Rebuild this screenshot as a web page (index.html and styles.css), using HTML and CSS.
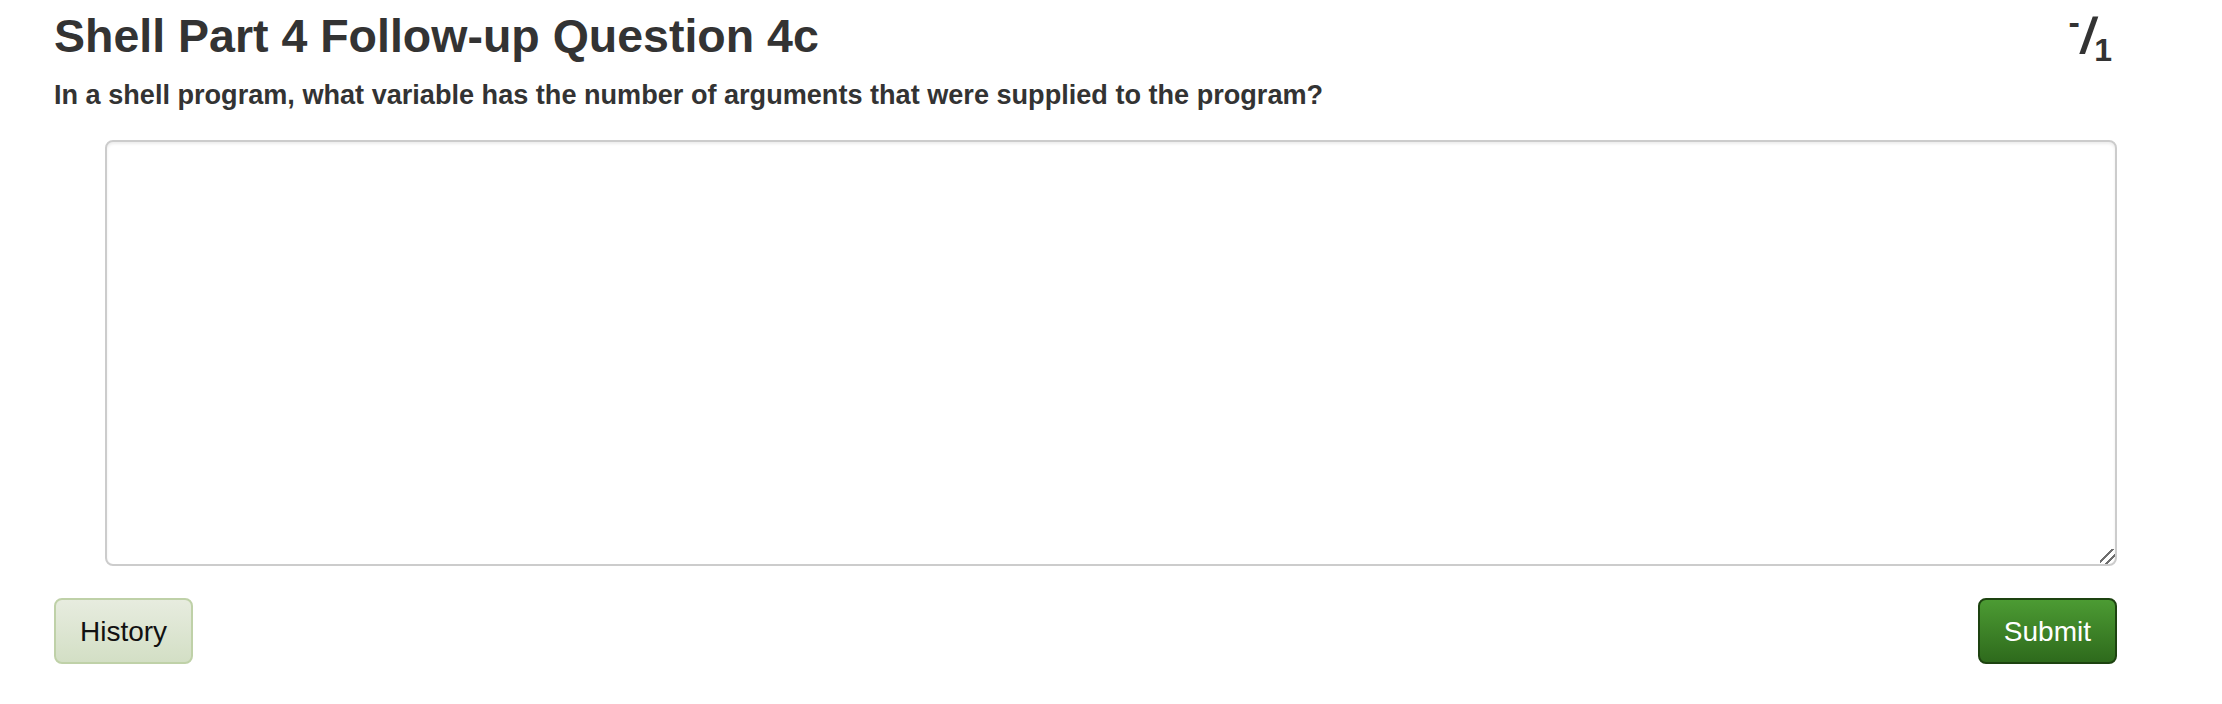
FILE: index.html
```html
<!DOCTYPE html>
<html lang="en">
<head>
<meta charset="utf-8">
<title>Shell Part 4 Follow-up Question 4c</title>
<link rel="stylesheet" href="styles.css">
</head>
<body>
<div class="page">
  <div class="header">
    <h1 class="title">Shell Part 4 Follow-up Question 4c</h1>
    <span class="score"><sup class="score-num">-</sup><span class="score-slash">/</span><sub class="score-den">1</sub></span>
  </div>
  <p class="question">In a shell program, what variable has the number of arguments that were supplied to the program?</p>
  <textarea class="answer"></textarea>
  <div class="actions">
    <button class="btn btn-history" type="button">History</button>
    <button class="btn btn-submit" type="button">Submit</button>
  </div>
</div>
</body>
</html>
```
FILE: styles.css
```css
html, body {
  margin: 0;
  padding: 0;
  background: #ffffff;
}

body {
  font-family: "Liberation Sans", Arial, Helvetica, sans-serif;
  color: #333333;
}

.page {
  padding: 10px 105px 0 54px;
}

.header {
  display: flex;
  align-items: baseline;
  justify-content: space-between;
}

.title {
  margin: 0;
  font-size: 46.5px;
  line-height: 52px;
  font-weight: bold;
  color: #333333;
}

.score {
  font-size: 48px;
  line-height: 52px;
  font-weight: bold;
  color: #333333;
  white-space: nowrap;
  margin-right: 5px;
}

.score-num,
.score-den {
  line-height: 0;
}

.score-num {
  font-size: 34px;
  vertical-align: 18px;
  margin-right: 2px;
}

.score-slash {
  display: inline-block;
  transform: skewX(-10deg) scaleY(1.05);
  margin-right: -1px;
}

.score-den {
  font-size: 32px;
  vertical-align: -9px;
}

.question {
  margin: 14px 0 0 0;
  font-size: 27.1px;
  line-height: 38px;
  font-weight: bold;
  color: #333333;
}

.answer {
  display: block;
  box-sizing: border-box;
  width: calc(100% - 51px);
  height: 426px;
  margin: 26px 0 0 51px;
  padding: 8px 12px;
  border: 2px solid #cccccc;
  border-radius: 8px;
  box-shadow: inset 0 2px 3px rgba(0, 0, 0, 0.075);
  font-family: "Liberation Sans", Arial, sans-serif;
  font-size: 28px;
  color: #555555;
  background: #ffffff;
  resize: both;
  outline: none;
}

.answer::-webkit-resizer {
  background: linear-gradient(135deg,
    transparent 0 38%,
    #6f6f6f 38% 50%,
    transparent 50% 64%,
    #6f6f6f 64% 76%,
    transparent 76% 100%);
}

.actions {
  display: flex;
  justify-content: space-between;
  margin-top: 32px;
}

.btn {
  box-sizing: border-box;
  height: 66px;
  padding: 12px 24px;
  border-radius: 8px;
  font-family: "Liberation Sans", Arial, sans-serif;
  font-size: 28px;
  line-height: 40px;
  cursor: pointer;
}

.btn-history {
  color: #111111;
  border: 2px solid #bfd1a8;
  background: linear-gradient(to bottom, #e7ecdf 0%, #d3dfc5 100%);
}

.btn-submit {
  color: #ffffff;
  border: 2px solid #1d4310;
  background: linear-gradient(to bottom, #4c9b33 0%, #2e6a1c 100%);
}
```
